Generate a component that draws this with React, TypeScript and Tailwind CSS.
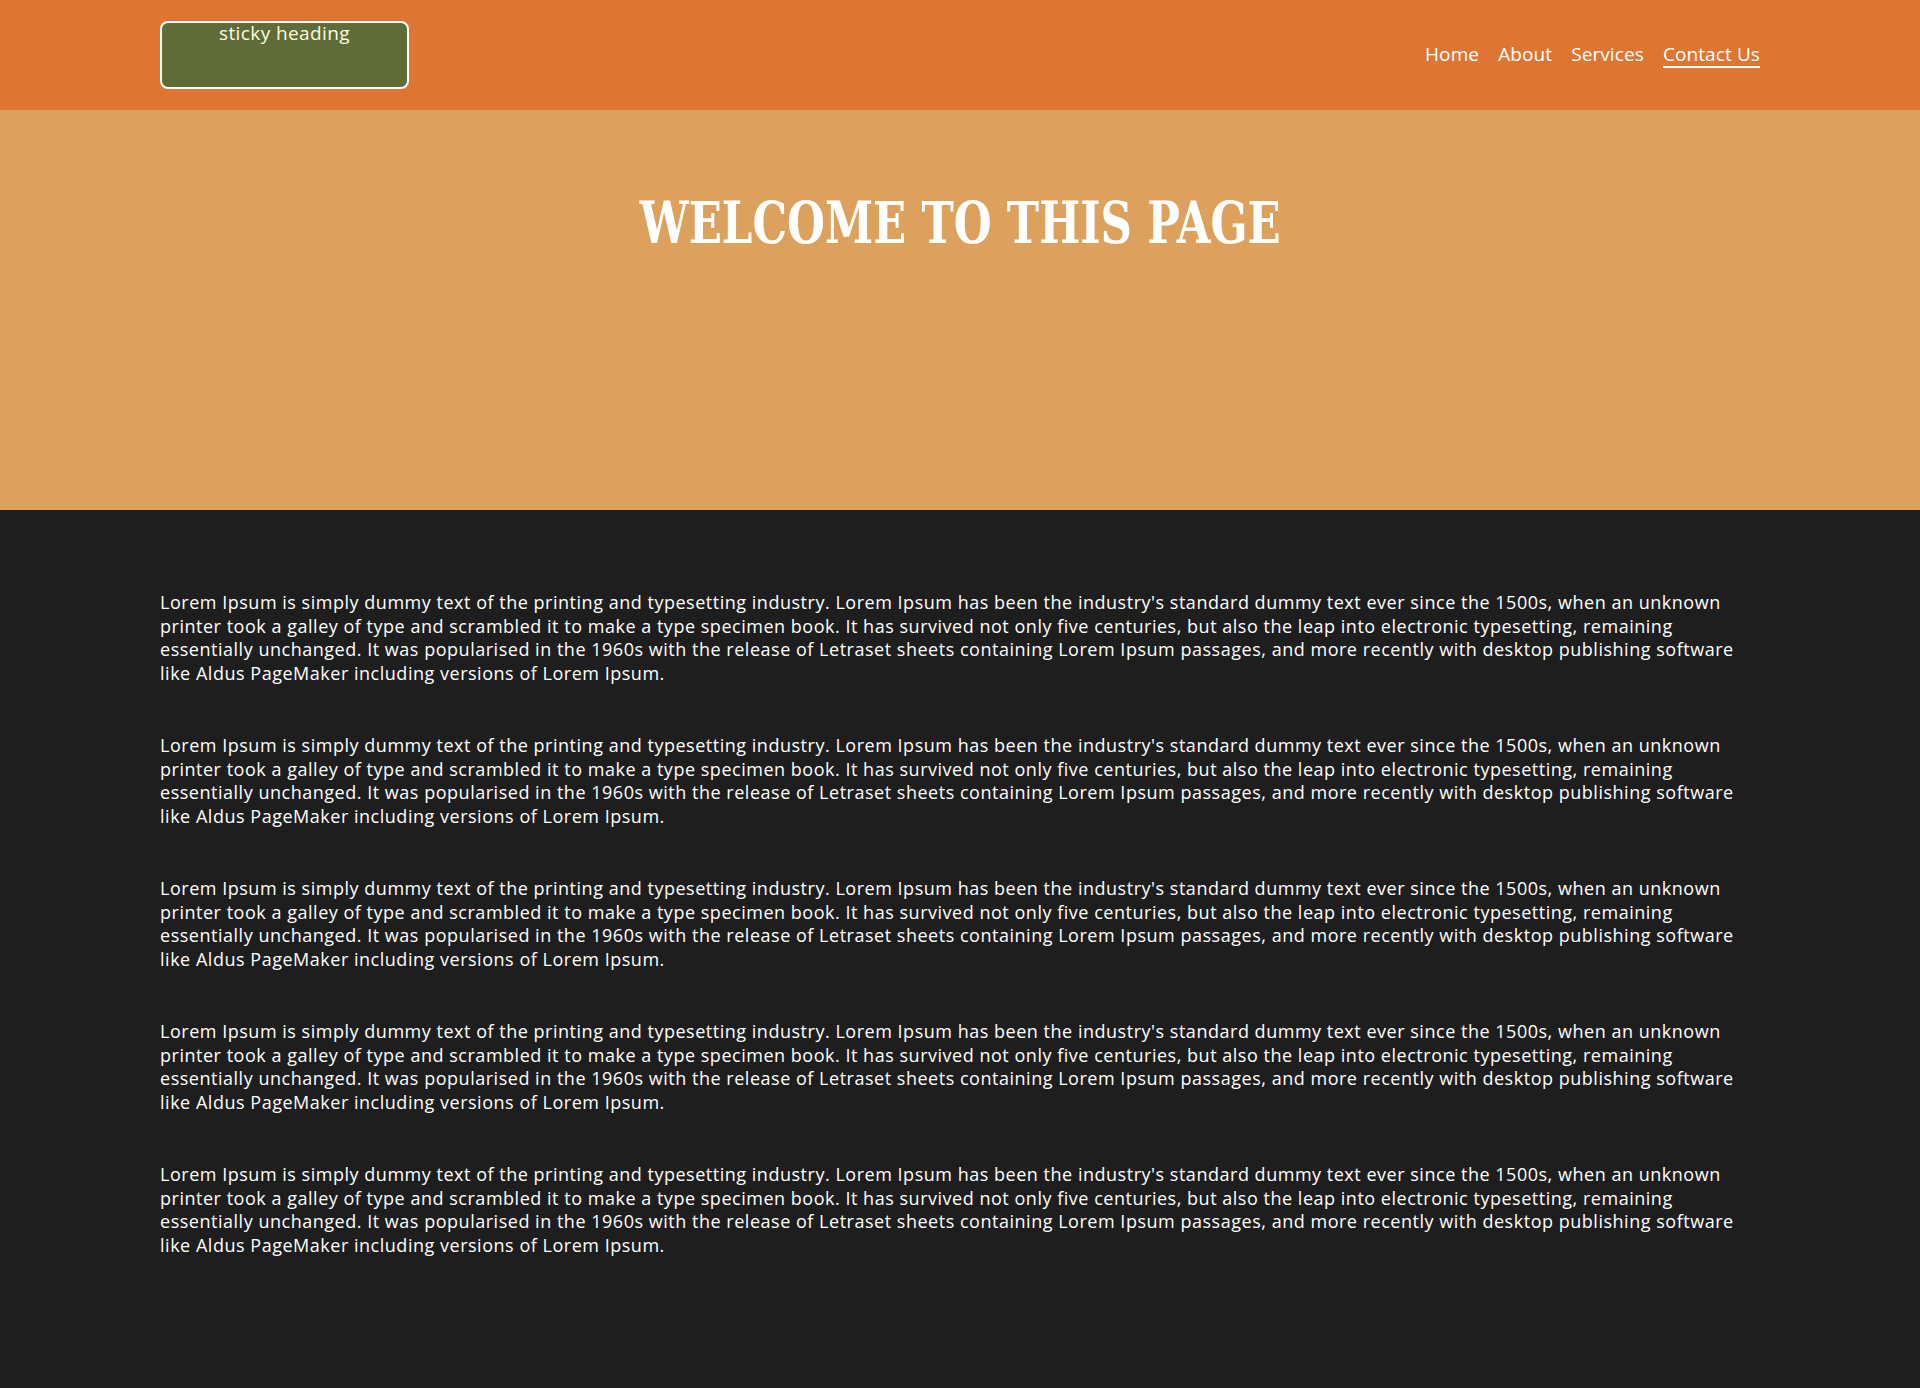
const lorem =
  "Lorem Ipsum is simply dummy text of the printing and typesetting industry. Lorem Ipsum has been the industry's standard dummy text ever since the 1500s, when an unknown printer took a galley of type and scrambled it to make a type specimen book. It has survived not only five centuries, but also the leap into electronic typesetting, remaining essentially unchanged. It was popularised in the 1960s with the release of Letraset sheets containing Lorem Ipsum passages, and more recently with desktop publishing software like Aldus PageMaker including versions of Lorem Ipsum.";

const navLinks = ["Home", "About", "Services", "Contact Us"];

export default function App() {
  return (
    <div className="min-h-[1388px] bg-[#1e1e1e] font-['Open_Sans',sans-serif]">
      <header className="sticky top-0 z-10 h-[110px] bg-[#dd7633]">
        <div className="mx-auto flex h-full w-[1600px] items-center justify-between">
          <div className="flex h-[68px] w-[249px] justify-center rounded-lg border-2 border-white bg-[#606c38]">
            <span className="text-[19px] leading-[20px] tracking-[0.4px] text-[#fefae0]">sticky heading</span>
          </div>
          <nav className="flex items-center gap-[19px]">
            {navLinks.map((link) => (
              <a
                key={link}
                href="#"
                className={
                  link === "Contact Us"
                    ? "border-b-2 border-white text-[19px] leading-[24px] tracking-[0.1px] text-white"
                    : "border-b-2 border-transparent text-[19px] leading-[24px] tracking-[0.1px] text-white"
                }
              >
                {link}
              </a>
            ))}
          </nav>
        </div>
      </header>

      <section className="flex h-[400px] justify-center bg-[#dda15e] pt-[78px]">
        <h1 className="inline-block h-fit scale-x-[0.75] font-['DejaVu_Serif',serif] text-[58px] font-bold leading-[70px] text-white">
          WELCOME TO THIS PAGE
        </h1>
      </section>

      <main className="mx-auto flex w-[1600px] flex-col gap-[49px] pb-[120px] pt-[81px]">
        {[0, 1, 2, 3, 4].map((i) => (
          <p key={i} className="text-[18px] leading-[23.5px] tracking-[0.52px] text-white">
            {lorem}
          </p>
        ))}
      </main>
    </div>
  );
}
